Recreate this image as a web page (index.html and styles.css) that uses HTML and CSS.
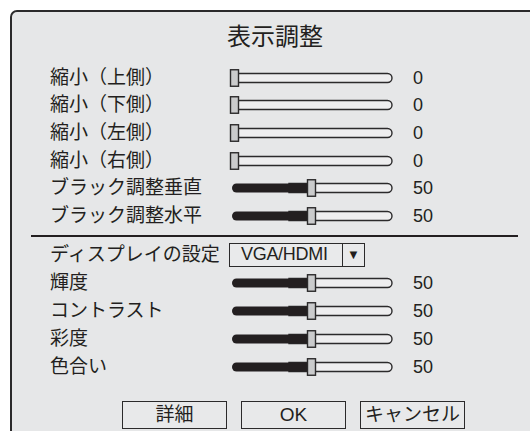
FILE: index.html
```html
<!DOCTYPE html>
<html lang="ja">
<head>
<meta charset="utf-8">
<link rel="stylesheet" href="styles.css">
</head>
<body>
<div class="panel">
  <div class="title">表示調整</div>

  <div class="rows">
    <div class="label">縮小（上側）</div>
    <svg class="slider" width="164" height="20" viewBox="0 0 164 20"><path class="track" d="M2 5.5 H158.5 A4.5 4.5 0 0 1 158.5 14.5 H2 Z"/><rect class="thumb" x="1.5" y="1.75" width="8" height="16.5"/></svg>
    <div class="value">0</div>

    <div class="label">縮小（下側）</div>
    <svg class="slider" width="164" height="20" viewBox="0 0 164 20"><path class="track" d="M2 5.5 H158.5 A4.5 4.5 0 0 1 158.5 14.5 H2 Z"/><rect class="thumb" x="1.5" y="1.75" width="8" height="16.5"/></svg>
    <div class="value">0</div>

    <div class="label">縮小（左側）</div>
    <svg class="slider" width="164" height="20" viewBox="0 0 164 20"><path class="track" d="M2 5.5 H158.5 A4.5 4.5 0 0 1 158.5 14.5 H2 Z"/><rect class="thumb" x="1.5" y="1.75" width="8" height="16.5"/></svg>
    <div class="value">0</div>

    <div class="label">縮小（右側）</div>
    <svg class="slider" width="164" height="20" viewBox="0 0 164 20"><path class="track" d="M2 5.5 H158.5 A4.5 4.5 0 0 1 158.5 14.5 H2 Z"/><rect class="thumb" x="1.5" y="1.75" width="8" height="16.5"/></svg>
    <div class="value">0</div>

    <div class="label">ブラック調整垂直</div>
    <svg class="slider" width="164" height="20" viewBox="0 0 164 20"><path class="track" d="M60 5.5 H158.5 A4.5 4.5 0 0 1 158.5 14.5 H60 Z"/><rect class="fill" x="3" y="5.5" width="78" height="9" rx="4.5"/><rect class="thumb" x="78.5" y="1.75" width="8" height="16.5"/></svg>
    <div class="value">50</div>

    <div class="label">ブラック調整水平</div>
    <svg class="slider" width="164" height="20" viewBox="0 0 164 20"><path class="track" d="M60 5.5 H158.5 A4.5 4.5 0 0 1 158.5 14.5 H60 Z"/><rect class="fill" x="3" y="5.5" width="78" height="9" rx="4.5"/><rect class="thumb" x="78.5" y="1.75" width="8" height="16.5"/></svg>
    <div class="value">50</div>
  </div>

  <div class="separator"></div>

  <div class="rows rows-bottom">
    <div class="label">ディスプレイの設定</div>
    <div class="select"><span class="select-text">VGA/HDMI</span><span class="select-arrow">▼</span></div>
    <div class="value"></div>

    <div class="label">輝度</div>
    <svg class="slider" width="164" height="20" viewBox="0 0 164 20"><path class="track" d="M60 5.5 H158.5 A4.5 4.5 0 0 1 158.5 14.5 H60 Z"/><rect class="fill" x="3" y="5.5" width="78" height="9" rx="4.5"/><rect class="thumb" x="78.5" y="1.75" width="8" height="16.5"/></svg>
    <div class="value">50</div>

    <div class="label">コントラスト</div>
    <svg class="slider" width="164" height="20" viewBox="0 0 164 20"><path class="track" d="M60 5.5 H158.5 A4.5 4.5 0 0 1 158.5 14.5 H60 Z"/><rect class="fill" x="3" y="5.5" width="78" height="9" rx="4.5"/><rect class="thumb" x="78.5" y="1.75" width="8" height="16.5"/></svg>
    <div class="value">50</div>

    <div class="label">彩度</div>
    <svg class="slider" width="164" height="20" viewBox="0 0 164 20"><path class="track" d="M60 5.5 H158.5 A4.5 4.5 0 0 1 158.5 14.5 H60 Z"/><rect class="fill" x="3" y="5.5" width="78" height="9" rx="4.5"/><rect class="thumb" x="78.5" y="1.75" width="8" height="16.5"/></svg>
    <div class="value">50</div>

    <div class="label">色合い</div>
    <svg class="slider" width="164" height="20" viewBox="0 0 164 20"><path class="track" d="M60 5.5 H158.5 A4.5 4.5 0 0 1 158.5 14.5 H60 Z"/><rect class="fill" x="3" y="5.5" width="78" height="9" rx="4.5"/><rect class="thumb" x="78.5" y="1.75" width="8" height="16.5"/></svg>
    <div class="value">50</div>
  </div>

  <div class="buttons">
    <div class="button">詳細</div>
    <div class="button">OK</div>
    <div class="button">キャンセル</div>
  </div>
</div>
</body>
</html>
```

FILE: styles.css
```css
html, body {
  margin: 0;
  padding: 0;
  background: #ffffff;
  overflow: hidden;
  width: 530px;
  height: 431px;
}

body {
  font-family: "Liberation Sans", "Noto Sans CJK JP", sans-serif;
  color: #231f20;
}

.panel {
  box-sizing: border-box;
  margin: 10px 0 0 10px;
  width: 530px;
  height: 440px;
  border: 2px solid #2b2a2b;
  border-radius: 7px;
  background: #e6e7e8;
}

.title {
  text-align: center;
  font-size: 24px;
  line-height: 28px;
  padding-top: 11px;
  height: 52px;
  box-sizing: border-box;
}

.rows {
  display: grid;
  grid-template-columns: 179px 164px auto;
  grid-auto-rows: 27.6px;
  align-items: center;
  padding-left: 38px;
}

.rows-bottom {
  grid-auto-rows: 28px;
  margin-top: 4px;
}

.label {
  font-size: 19px;
  line-height: 20px;
  white-space: nowrap;
}

.value {
  font-size: 18px;
  line-height: 20px;
  padding-left: 20px;
}

.slider {
  display: block;
}

.track {
  fill: #eeeeef;
  stroke: #2b2a2b;
  stroke-width: 1.4;
}

.fill {
  fill: #231f20;
}

.thumb {
  fill: #cacbcc;
  stroke: #2b2a2b;
  stroke-width: 1.4;
}

.separator {
  height: 2px;
  background: #231f20;
  margin: 5px 0 0 19px;
  width: 487px;
}

.select {
  display: flex;
  box-sizing: border-box;
  width: 136px;
  height: 24px;
  border: 1.5px solid #2b2a2b;
  background: #e9eaeb;
  align-items: stretch;
}

.select-text {
  flex: 1;
  font-size: 18px;
  line-height: 21px;
  padding-left: 11px;
  letter-spacing: -0.3px;
}

.select-arrow {
  width: 21px;
  border-left: 1.5px solid #2b2a2b;
  font-size: 13px;
  line-height: 21px;
  text-align: center;
}

.buttons {
  display: flex;
  gap: 14px;
  margin: 20px 0 0 110px;
}

.button {
  box-sizing: border-box;
  width: 105px;
  height: 28px;
  border: 1.5px solid #2b2a2b;
  background: #e8e9ea;
  text-align: center;
  font-size: 19px;
  line-height: 25px;
}
```
